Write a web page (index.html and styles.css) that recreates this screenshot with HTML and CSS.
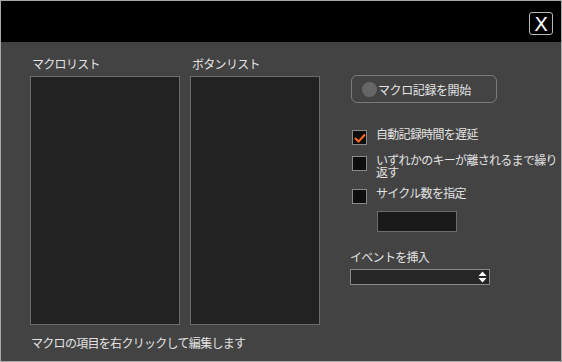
FILE: index.html
```html
<!DOCTYPE html>
<html lang="ja">
<head>
    <meta charset="UTF-8">
    <title>マクロ</title>
    <link rel="stylesheet" href="styles.css">
</head>
<body>
    <div class="window">
        <!-- ヘッダー -->
        <div class="header">
            <button class="close-btn">X</button>
        </div>

        <div class="content">
            <div class="lists">
                <div class="list-col macro">
                    <div class="list-label">マクロリスト</div>
                    <div class="list-box"></div>
                </div>
                <div class="list-col buttons">
                    <div class="list-label">ボタンリスト</div>
                    <div class="list-box"></div>
                </div>
            </div>

            <div class="options">
                <button class="record-btn"><span class="dot"></span>マクロ記録を開始</button>

                <div class="check-row first">
                    <span class="box checked">
                        <svg width="12" height="10" viewBox="0 0 12 10"><path d="M1 5 L4.5 8.5 L11 1.5" stroke="#ff6a2a" stroke-width="2" fill="none"/></svg>
                    </span>
                    <span class="check-text">自動記録時間を遅延</span>
                </div>
                <div class="check-row">
                    <span class="box"></span>
                    <span class="check-text">いずれかのキーが離されるまで繰り返す</span>
                </div>
                <div class="check-row">
                    <span class="box"></span>
                    <span class="check-text">サイクル数を指定</span>
                </div>
                <div class="cycle-input"></div>

                <div class="event-label">イベントを挿入</div>
                <div class="event-select">
                    <svg width="9" height="12" viewBox="0 0 9 12"><path d="M4.5 0.5 L8.5 5 H0.5 Z M4.5 11.5 L8.5 7 H0.5 Z" fill="#ffffff"/></svg>
                </div>
            </div>
        </div>

        <div class="footer">マクロの項目を右クリックして編集します</div>
    </div>
</body>
</html>
```

FILE: styles.css
```css
/* 全体 */
body {
    margin: 0;
    font-family: "Noto Sans CJK JP", "DejaVu Sans", sans-serif;
    font-size: 12px;
    letter-spacing: -0.7px;
    color: #e2e2e2;
}

.window {
    width: 560px;
    height: 360px;
    border: 1px solid #a8a8a8;
    background-color: #434343;
    display: flex;
    flex-direction: column;
}

.header {
    height: 41px;
    background-color: #000;
    display: flex;
    justify-content: flex-end;
    align-items: flex-start;
}

.close-btn {
    margin: 11px 8px 0 0;
    width: 24px;
    height: 23px;
    padding: 0;
    background-color: #000;
    border: 1px solid #b8b8b8;
    border-radius: 3px;
    color: #fff;
    font-family: "DejaVu Sans", sans-serif;
    font-size: 20px;
    line-height: 20px;
    letter-spacing: 0;
}

.content {
    display: flex;
    height: 283px;
}

.lists {
    display: flex;
    gap: 10px;
    padding-left: 29px;
}

.list-label {
    height: 22px;
    line-height: 20px;
    padding: 12px 0 0 2px;
}

.list-box {
    height: 247px;
    background-color: #222;
    border: 1px solid #6c6c6c;
}

.macro .list-box {
    width: 148px;
}

.buttons .list-box {
    width: 128px;
}

.options {
    padding-left: 30px;
    display: flex;
    flex-direction: column;
    align-items: flex-start;
}

.record-btn {
    margin-top: 33px;
    margin-left: 1px;
    width: 146px;
    height: 28px;
    display: flex;
    align-items: center;
    padding: 0 0 0 10px;
    background-color: #434343;
    border: 1px solid #7a7a7a;
    border-radius: 6px;
    color: #e2e2e2;
    font-family: inherit;
    font-size: 12px;
    letter-spacing: -0.4px;
}

.dot {
    width: 15px;
    height: 15px;
    border-radius: 50%;
    background-color: #666;
    margin-right: 1px;
}

.check-row {
    display: flex;
    align-items: flex-start;
    gap: 9px;
    margin-left: 2px;
    margin-top: 8px;
}

.check-row.first {
    margin-top: 24px;
}

.box {
    width: 13px;
    height: 13px;
    flex-shrink: 0;
    margin-top: 3px;
    background-color: #0e0e0e;
    border: 1px solid #8a8a8a;
    display: flex;
    align-items: center;
    justify-content: center;
}

.check-text {
    width: 186px;
    line-height: 12px;
    padding-top: 1px;
}

.cycle-input {
    margin: 7px 0 0 27px;
    width: 78px;
    height: 19px;
    background-color: #1a1a1a;
    border: 1px solid #6c6c6c;
}

.event-label {
    margin-top: 16px;
    line-height: 18px;
}

.event-select {
    margin-top: 3px;
    width: 136px;
    height: 14px;
    background-color: #262626;
    border: 1px solid #8a8a8a;
    display: flex;
    justify-content: flex-end;
    align-items: center;
    padding-right: 2px;
}

.footer {
    padding: 8px 0 0 30px;
    line-height: 20px;
}
```
